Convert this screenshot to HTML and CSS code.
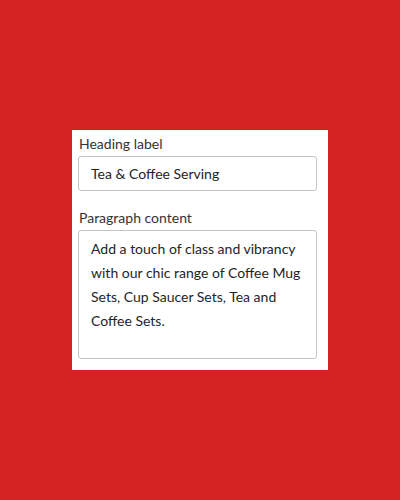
FILE: index.html
```html
<!DOCTYPE html>
<html lang="en">
<head>
  <meta charset="UTF-8">
  <meta name="viewport" content="width=device-width, initial-scale=1.0">
  <title>Content editor</title>
  <link rel="stylesheet" href="styles.css">
</head>
<body>
  <div class="panel">
    <label class="field-label" for="heading">Heading label</label>
    <input class="field" type="text" id="heading" value="Tea &amp; Coffee Serving">

    <label class="field-label second" for="paragraph">Paragraph content</label>
    <textarea class="field area" id="paragraph">Add a touch of class and vibrancy with our chic range of Coffee Mug Sets, Cup Saucer Sets, Tea and Coffee Sets.</textarea>
  </div>
</body>
</html>
```

FILE: styles.css
```css
html, body {
  margin: 0;
  padding: 0;
  height: 100%;
}

body {
  background-color: #d32323;
  font-family: Lato, "Noto Sans", sans-serif;
  display: flex;
  align-items: center;
  justify-content: center;
}

.panel {
  width: 256px;
  box-sizing: border-box;
  background: white;
  padding: 3px 11px 11px 6px;
  display: flex;
  flex-direction: column;
}

.field-label {
  font-size: 14px;
  line-height: 21px;
  color: #333;
  margin: 0 0 2px 1px;
}

.field-label.second {
  margin-top: 16px;
}

.field {
  font-family: inherit;
  font-size: 14px;
  line-height: 21px;
  color: #212529;
  border: 1px solid #c4c4c4;
  border-radius: 3px;
  padding: 6px 12px;
  margin: 0;
  width: 100%;
  box-sizing: border-box;
  outline: none;
}

.area {
  line-height: 24px;
  height: 129px;
  padding: 6px 12px;
  resize: none;
  overflow: hidden;
}
```
